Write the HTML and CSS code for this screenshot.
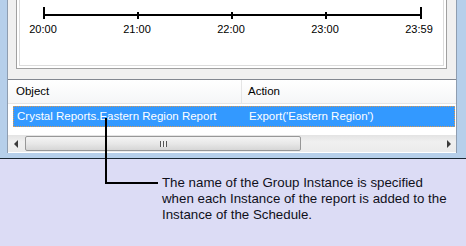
FILE: index.html
```html
<!DOCTYPE html>
<html lang="en">
<head>
    <meta charset="UTF-8">
    <title>Group Instance</title>
    <link rel="stylesheet" href="styles.css">
</head>
<body>
    <div class="window">
        <div class="client">
            <div class="timeline-panel">
                <div class="timeline-inner">
                    <svg class="axis" width="423" height="20" viewBox="0 0 423 20">
                        <line x1="24" y1="15" x2="401" y2="15" stroke="#000" stroke-width="2"/>
                        <line x1="24" y1="7" x2="24" y2="19" stroke="#000" stroke-width="2"/>
                        <line x1="118" y1="12" x2="118" y2="19" stroke="#000" stroke-width="2"/>
                        <line x1="212" y1="12" x2="212" y2="19" stroke="#000" stroke-width="2"/>
                        <line x1="306" y1="12" x2="306" y2="19" stroke="#000" stroke-width="2"/>
                        <line x1="401" y1="7" x2="401" y2="19" stroke="#000" stroke-width="2"/>
                    </svg>
                    <div class="labels">
                        <span>20:00</span>
                        <span>21:00</span>
                        <span>22:00</span>
                        <span>23:00</span>
                        <span>23:59</span>
                    </div>
                </div>
            </div>

            <div class="listview">
                <div class="lv-header">
                    <div class="col col-object">Object</div>
                    <div class="col col-action">Action</div>
                </div>
                <div class="lv-row selected">
                    <div class="col col-object">Crystal Reports.Eastern Region Report</div>
                    <div class="col col-action">Export('Eastern Region')</div>
                </div>
                <div class="hscroll">
                    <div class="arrow arrow-left"></div>
                    <div class="track">
                        <div class="thumb"><span class="grip"></span></div>
                    </div>
                    <div class="arrow arrow-right"></div>
                </div>
            </div>
        </div>
    </div>

    <div class="callout">
        <div class="callout-line"></div>
        <p class="callout-text">The name of the Group Instance is specified<br>when each Instance of the report is added to the<br>Instance of the Schedule.</p>
    </div>
</body>
</html>
```

FILE: styles.css
```css
body {
    margin: 0;
    width: 466px;
    height: 246px;
    overflow: hidden;
    background-color: #dcdcf5;
    font-family: "Liberation Sans", Arial, sans-serif;
    position: relative;
}

/* window frame */
.window {
    height: 159px;
    box-sizing: border-box;
    background-color: #b6cfea;
    padding: 0 9px 6px 7px;
    border-bottom: 1px solid #1b2733;
}
.client {
    height: 153px;
    box-sizing: border-box;
    background-color: #f0f0f0;
    border-left: 1px solid #8e9db0;
    border-right: 1px solid #8e9db0;
    border-bottom: 1px solid #8e9db0;
}

/* timeline */
.timeline-panel {
    margin-left: 8px;
    width: 431px;
    height: 69px;
    box-sizing: border-box;
    border: 1px solid #a0a0a0;
    border-top: none;
    padding: 0 2px 2px 2px;
    background-color: #fff;
}
.timeline-inner {
    height: 66px;
    box-sizing: border-box;
    border: 1px solid #dcdcdc;
    border-top: none;
    background-color: #fff;
}
.axis {
    display: block;
}
.labels {
    display: flex;
    gap: 54px;
    margin-left: 3px;
    margin-top: 3px;
    font-size: 11px;
    color: #000;
}
.labels span {
    width: 40px;
    text-align: center;
}

/* list view */
.listview {
    margin-top: 10px;
    height: 73px;
    border-top: 1px solid #828790;
    background-color: #fff;
    font-size: 11.5px;
}
.lv-header {
    display: flex;
    height: 24px;
    box-sizing: border-box;
    border-bottom: 1px solid #e5e5e5;
    background: linear-gradient(#ffffff, #f5f6f7);
}
.lv-header .col {
    line-height: 23px;
    color: #000;
}
.col {
    box-sizing: border-box;
    white-space: nowrap;
}
.lv-header .col-object {
    width: 234px;
    padding-left: 8px;
    border-right: 1px solid #e5e5e5;
}
.col-action {
    padding-left: 6px;
}
.lv-row {
    display: flex;
    height: 21px;
    margin: 2px 1px 0 5px;
    line-height: 19px;
}
.lv-row.selected {
    background-color: #3399ff;
    color: #fff;
    border: 1px dotted #d99a52;
    box-sizing: border-box;
}
.lv-row .col-object {
    width: 229px;
    padding-left: 3px;
}

/* horizontal scrollbar */
.hscroll {
    display: flex;
    align-items: center;
    margin-top: 8px;
    height: 17px;
    background: linear-gradient(#e3e3e3, #f0f0f0 40%, #ebebeb);
}
.arrow {
    width: 17px;
    height: 17px;
    position: relative;
}
.arrow-left::after, .arrow-right::after {
    content: "";
    position: absolute;
    top: 5px;
    border-top: 4px solid transparent;
    border-bottom: 4px solid transparent;
}
.arrow-left::after {
    left: 6px;
    border-right: 4px solid #3c3c3c;
}
.arrow-right::after {
    left: 8px;
    border-left: 4px solid #3c3c3c;
}
.track {
    flex: 1;
    height: 17px;
}
.thumb {
    width: 276px;
    height: 15px;
    margin-top: 1px;
    box-sizing: border-box;
    border: 1px solid #979797;
    border-radius: 2px;
    background: linear-gradient(#f4f4f4, #e8e8e8 50%, #d6d6d6);
    display: flex;
    justify-content: center;
    align-items: center;
}
.grip {
    width: 7px;
    height: 6px;
    background: repeating-linear-gradient(90deg, #555 0 1px, #f0f0f0 1px 3px);
}

/* callout */
.callout-line {
    position: absolute;
    left: 105px;
    top: 118px;
    width: 51px;
    height: 64px;
    border-left: 2px solid #000;
    border-bottom: 2px solid #000;
}
.callout-text {
    margin: 16px 0 0 162px;
    font-size: 13.3px;
    line-height: 16px;
    color: #10101a;
}
```
